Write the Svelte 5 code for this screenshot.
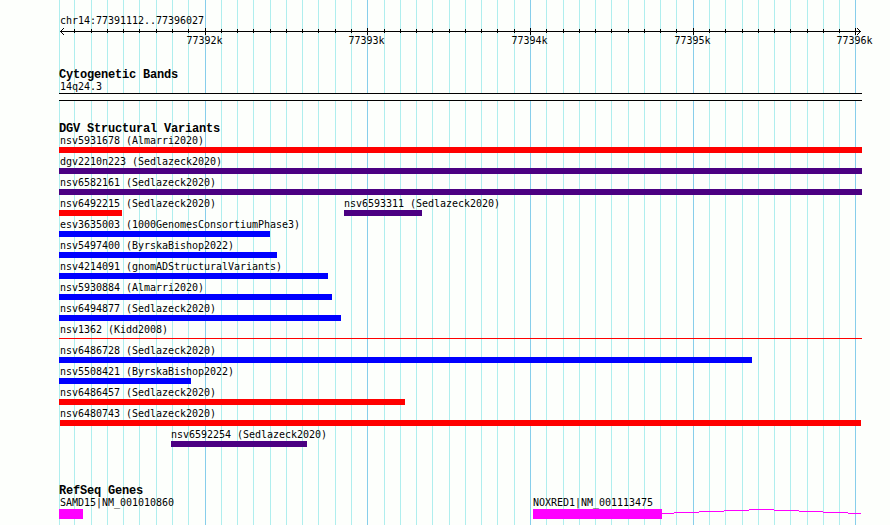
<script lang="ts">
  interface Feature {
    name: string;
    start: number;
    end: number;
    color: string;
    thin?: boolean;
  }

  const LEFT = 59;
  const MAJOR = [205, 367, 530, 693, 855];
  const MINOR = [
    59, 74, 91, 107, 123, 139, 156, 172, 188, 221, 237, 253, 270, 286, 302, 318, 335, 351,
    384, 400, 416, 432, 449, 465, 481, 497, 514, 546, 563, 579, 595, 611, 628, 644, 660, 676,
    709, 725, 742, 758, 774, 790, 807, 823, 839,
  ];

  const rows: Feature[][] = [
    [{ name: "nsv5931678 (Almarri2020)", start: 59, end: 862, color: "loss" }],
    [{ name: "dgv2210n223 (Sedlazeck2020)", start: 59, end: 862, color: "inversion" }],
    [{ name: "nsv6582161 (Sedlazeck2020)", start: 59, end: 862, color: "inversion" }],
    [
      { name: "nsv6492215 (Sedlazeck2020)", start: 59, end: 122, color: "loss" },
      { name: "nsv6593311 (Sedlazeck2020)", start: 344, end: 422, color: "inversion" },
    ],
    [{ name: "esv3635003 (1000GenomesConsortiumPhase3)", start: 59, end: 270, color: "gain" }],
    [{ name: "nsv5497400 (ByrskaBishop2022)", start: 59, end: 277, color: "gain" }],
    [{ name: "nsv4214091 (gnomADStructuralVariants)", start: 59, end: 328, color: "gain" }],
    [{ name: "nsv5930884 (Almarri2020)", start: 59, end: 332, color: "gain" }],
    [{ name: "nsv6494877 (Sedlazeck2020)", start: 59, end: 341, color: "gain" }],
    [{ name: "nsv1362 (Kidd2008)", start: 59, end: 862, color: "loss", thin: true }],
    [{ name: "nsv6486728 (Sedlazeck2020)", start: 59, end: 752, color: "gain" }],
    [{ name: "nsv5508421 (ByrskaBishop2022)", start: 59, end: 191, color: "gain" }],
    [{ name: "nsv6486457 (Sedlazeck2020)", start: 59, end: 405, color: "loss" }],
    [{ name: "nsv6480743 (Sedlazeck2020)", start: 60, end: 861, color: "loss" }],
    [{ name: "nsv6592254 (Sedlazeck2020)", start: 171, end: 307, color: "inversion" }],
  ];

  const genes: Feature[] = [
    { name: "SAMD15|NM_001010860", start: 59, end: 83, color: "gene" },
    { name: "NOXRED1|NM_001113475", start: 533, end: 662, color: "gene" },
  ];
</script>

<div class="browser">
  <svg class="gridlines" width="890" height="525" shape-rendering="crispEdges">
    {#each MINOR as x}
      <rect {x} y="0" width="1" height="525" fill="#afeeee" />
    {/each}
    {#each MAJOR as x}
      <rect {x} y="0" width="1" height="525" fill="#87ceeb" />
    {/each}
  </svg>

  <header>
    <div class="label region">chr14:77391112..77396027</div>
    <svg class="ruler" width="890" height="22">
      <g shape-rendering="crispEdges">
        <rect x="60" y="4" width="801" height="1" />
        {#each MINOR.slice(1) as x}
          <rect {x} y="2" width="1" height="4" />
        {/each}
        {#each MAJOR as x}
          <rect {x} y="1" width="1" height="7" />
        {/each}
        <path
          d="M61 3h1v1h-1zM62 2h1v1h-1zM63 1h1v1h-1zM61 5h1v1h-1zM62 6h1v1h-1zM63 7h1v1h-1zM859 3h1v1h-1zM858 2h1v1h-1zM857 1h1v1h-1zM859 5h1v1h-1zM858 6h1v1h-1zM857 7h1v1h-1z"
        />
      </g>
      {#each MAJOR as x, i}
        <text x={x - 18.5} y="17">{77392 + i}k</text>
      {/each}
    </svg>
  </header>

  <section class="cytobands">
    <h2>Cytogenetic Bands</h2>
    <div class="label">14q24.3</div>
    <div class="band"></div>
  </section>

  <section class="variants">
    <h2>DGV Structural Variants</h2>
    {#each rows as row}
      <div class="row">
        {#each row as f}
          <div class="feature" style="margin-left: {f.start - LEFT}px">
            <div class="label" class:inner={f.start > LEFT}>{f.name}</div>
            <div class="bar {f.color}" class:thin={f.thin} style="width: {f.end - f.start}px"></div>
          </div>
        {/each}
      </div>
    {/each}
  </section>

  <section class="genes">
    <h2>RefSeq Genes</h2>
    <div class="row">
      {#each genes as g, i}
        <div class="feature" style="margin-left: {g.start - LEFT}px">
          <div class="label" class:inner={g.start > LEFT}>{g.name}</div>
          <div class="exons">
            <div class="bar {g.color}" style="width: {g.end - g.start}px"></div>
            {#if i === 1}
              <svg width="199" height="10" shape-rendering="crispEdges">
                <path
                  d="M0 4.5h12M12 3.5h25M37 2.5h25M62 1.5h25M87 .5h25M112 1.5h25M137 2.5h24M161 3.5h25M186 4.5h13"
                  stroke="#ff00ff"
                />
              </svg>
            {/if}
          </div>
        </div>
      {/each}
    </div>
  </section>
</div>

<style>
  :global(body) {
    margin: 0;
    background: #fdfffc;
  }

  .browser {
    position: relative;
    box-sizing: border-box;
    width: 890px;
    height: 525px;
    padding-top: 15px;
    overflow: hidden;
    color: #000;
    font-family: "DejaVu Sans Mono", monospace;
    font-size: 10px;
    letter-spacing: -0.02px;
  }

  .gridlines {
    position: absolute;
    top: 0;
    left: 0;
  }

  header,
  section {
    position: relative;
  }

  section {
    margin-left: 59px;
    width: 803px;
  }

  svg {
    display: block;
  }

  .label {
    height: 12px;
    padding-left: 1px;
    line-height: 11px;
    white-space: pre;
  }

  .label.inner {
    padding-left: 0;
  }

  .region {
    margin-left: 59px;
    line-height: 12px;
  }

  h2 {
    height: 13px;
    margin: 0;
    font-family: "Liberation Mono", monospace;
    font-size: 12px;
    font-weight: bold;
    line-height: 15px;
    letter-spacing: -0.2px;
    white-space: pre;
  }

  .cytobands {
    margin-top: 19px;
  }

  .band {
    box-sizing: border-box;
    height: 8px;
    border: solid #000;
    border-width: 1px 0;
    background: #fdfffc;
  }

  .variants {
    margin-top: 21px;
  }

  .row {
    display: grid;
    height: 21px;
  }

  .feature {
    grid-area: 1 / 1;
  }

  .bar {
    height: 6px;
  }

  .bar.thin {
    height: 1px;
    margin-top: 2px;
  }

  .loss {
    background: #ff0000;
  }

  .gain {
    background: #0000ff;
  }

  .inversion {
    background: #4b0082;
  }

  .genes {
    margin-top: 34px;
  }

  .exons {
    display: flex;
  }

  .gene {
    height: 10px;
    background: #ff00ff;
  }
</style>
